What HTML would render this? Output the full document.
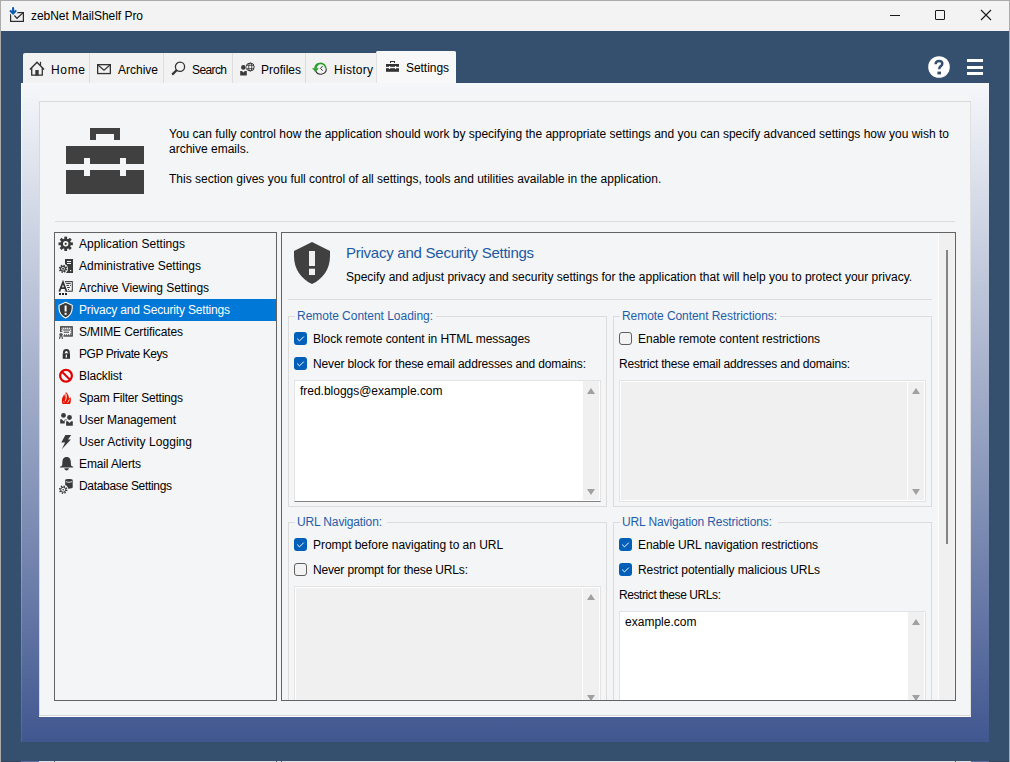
<!DOCTYPE html>
<html><head><meta charset="utf-8">
<style>
*{box-sizing:border-box;margin:0;padding:0}
html,body{width:1010px;height:762px;overflow:hidden}
body{position:relative;background:#354F6F;font-family:"Liberation Sans",sans-serif;font-size:12px;color:#000}
.a{position:absolute}
.t{position:absolute;white-space:nowrap;line-height:15px;font-size:12px}
svg{position:absolute;overflow:visible}
.sep{position:absolute;width:1px;background:#DDDDDD}
.cb{position:absolute;width:13px;height:13px;border-radius:3px;background:#005FB8}
.cb svg{left:0;top:0}
.cbu{position:absolute;width:13px;height:13px;border-radius:3px;border:1px solid #5F5F5F;background:#F3F3F3}
.grp{position:absolute;border:1px solid #DCDCDC}
.glbl{position:absolute;white-space:nowrap;line-height:15px;color:#1F5DAA;background:#F4F5F7;padding:0 2px}
.ta{position:absolute;background:#fff;border:1px solid #E3E3E3;overflow:hidden}
.tad{position:absolute;background:#F0F0F0;border:1px solid #E3E3E3;overflow:hidden}
.sb{position:absolute;top:0;bottom:0;right:0;width:17px;background:#F0F0F0}
.li{position:absolute;left:0;width:221px;height:22px}
</style></head><body>
<!-- window frame -->
<div class="a" style="left:0;top:0;width:1010px;height:762px;border:1px solid #ABABAB;border-bottom:none"></div>
<div class="a" style="left:1px;top:1px;width:1008px;height:30px;background:#F3F3F3"></div>
<div class="t" style="left:31px;top:9px;color:#000;letter-spacing:-0.037px">zebNet MailShelf Pro</div>

<!-- title icon -->
<svg style="left:0;top:0" width="40" height="31">
<rect x="10.6" y="12.6" width="12.8" height="8.8" fill="#EEEEF2" stroke="#2B2B2B" stroke-width="1.2"/>
<polyline points="13,14 17,18.3 23.2,12.6" fill="none" stroke="#2B2B2B" stroke-width="1.2"/>
<path d="M13.1 8 V11.5 M9.8 11 L13.1 14.3 L16.4 11" fill="none" stroke="#F3F3F3" stroke-width="3.6"/>
<path d="M13.1 8 V12.5 M10.6 11 L13.1 13.6 L15.6 11" fill="none" stroke="#0C5BB5" stroke-width="2.1" stroke-linecap="round"/>
</svg>
<!-- window controls -->
<div class="a" style="left:890px;top:15px;width:10px;height:1px;background:#1A1A1A"></div>
<div class="a" style="left:935px;top:10px;width:10px;height:10px;border:1px solid #1A1A1A;border-radius:1px"></div>
<svg style="left:980px;top:9px" width="12" height="12"><path d="M1 1 L11 11 M11 1 L1 11" stroke="#1A1A1A" stroke-width="1.1"/></svg>

<!-- tabs -->
<div class="a" style="left:23px;top:53px;width:354px;height:30px;background:#F2F2F2;border-radius:2px 0 0 0"></div>
<div class="sep" style="left:89px;top:53px;height:30px"></div>
<div class="sep" style="left:163px;top:53px;height:30px"></div>
<div class="sep" style="left:232px;top:53px;height:30px"></div>
<div class="sep" style="left:305px;top:53px;height:30px"></div>
<div class="a" style="left:376px;top:51px;width:80px;height:32px;background:#F8F8F8;border-left:1px solid #E2E2E2;border-radius:1.5px 1.5px 0 0"></div>
<div class="t" style="left:51px;top:63px;letter-spacing:0.661px">Home</div>
<div class="t" style="left:118px;top:63px;letter-spacing:-0.003px">Archive</div>
<div class="t" style="left:192px;top:63px;letter-spacing:-0.603px">Search</div>
<div class="t" style="left:261px;top:63px;letter-spacing:-0.002px">Profiles</div>
<div class="t" style="left:334px;top:63px;letter-spacing:0.276px">History</div>
<div class="t" style="left:406px;top:61px;letter-spacing:-0.049px">Settings</div>
<!-- tab icons -->
<svg style="left:26px;top:58px" width="24" height="22">
<path d="M3.9 11.4 L11 4.3 L18.1 11.4" fill="none" stroke="#333" stroke-width="1.4"/>
<path d="M5.7 10 V17.1 H16.3 V10" fill="none" stroke="#333" stroke-width="1.3"/>
<rect x="9.3" y="12" width="3.4" height="5.6" fill="#3A3A3A"/>
<path d="M14.5 3.8 V7.6" stroke="#333" stroke-width="1.2"/>
</svg>
<svg style="left:97px;top:64px" width="14" height="10">
<rect x="0.65" y="0.65" width="12.7" height="8.9" fill="none" stroke="#333" stroke-width="1.3"/>
<polyline points="1,1 7,6.3 13,1" fill="none" stroke="#333" stroke-width="1.2"/>
</svg>
<svg style="left:171px;top:61px" width="15" height="15">
<circle cx="9" cy="5.8" r="4.6" fill="none" stroke="#333" stroke-width="1.3"/>
<path d="M5.8 9 L1.2 13.6" stroke="#333" stroke-width="2.2"/>
</svg>
<svg style="left:236px;top:58px" width="24" height="22">
<circle cx="14.2" cy="9" r="4" fill="none" stroke="#333" stroke-width="1"/>
<ellipse cx="14.2" cy="9" rx="1.6" ry="4" fill="none" stroke="#333" stroke-width="0.8"/>
<path d="M10.5 7.3 H17.9 M10.5 10.7 H17.9" stroke="#333" stroke-width="0.8"/>
<circle cx="7.4" cy="9.4" r="3.1" fill="#F2F2F2"/>
<rect x="3.5" y="12.3" width="8" height="6" fill="#F2F2F2"/>
<circle cx="7.4" cy="9.4" r="2.3" fill="#3A3A3A"/>
<path d="M4.2 13 H6 L7.4 14.4 L8.8 13 H10.8 V17.6 H4.2 Z" fill="#3A3A3A"/>
</svg>
<svg style="left:308px;top:56px" width="24" height="22">
<path d="M18.4 12.4 A5.7 5.7 0 0 1 7.6 15" fill="none" stroke="#333" stroke-width="1.1"/>
<path d="M7.6 12.6 A5.1 5.1 0 0 1 17.8 12.4" fill="none" stroke="#2A9D2A" stroke-width="1.6"/>
<path d="M7.3 12.4 A5.4 5.4 0 0 1 10 8" fill="none" stroke="#2A9D2A" stroke-width="2.2"/>
<polygon points="4,12.2 10.9,12.2 7.45,15.9" fill="#2A9D2A"/>
<polyline points="14.6,10.1 12.5,12.4 14.6,14.7" fill="none" stroke="#333" stroke-width="1"/>
</svg>
<svg style="left:382px;top:54px" width="24" height="22">
<path d="M8 7 H13 V9 H12 V8 H9 V9 H8 Z" fill="#333"/>
<rect x="4" y="10" width="13" height="2.8" fill="#333"/>
<rect x="4" y="14.2" width="13" height="3.6" fill="#333"/>
<rect x="7" y="12" width="1.1" height="3" fill="#F8F8F8"/>
<rect x="13" y="12" width="1.1" height="3" fill="#F8F8F8"/>
</svg>
<!-- help + menu -->
<svg style="left:928px;top:56px" width="22" height="22">
<circle cx="11" cy="11" r="10.8" fill="#fff"/>
<path d="M7.6 8.3 C7.6 5.9 9.1 5.1 11 5.1 C13 5.1 14.3 6.1 14.3 7.8 C14.3 9.5 13.1 10 12.2 10.6 C11.5 11.1 11.3 11.6 11.3 13.3" fill="none" stroke="#354F6F" stroke-width="2.5"/>
<rect x="9.4" y="15.6" width="3.6" height="2.8" fill="#354F6F"/>
</svg>
<div class="a" style="left:967px;top:59px;width:16px;height:3px;background:#fff"></div>
<div class="a" style="left:967px;top:65.5px;width:16px;height:3px;background:#fff"></div>
<div class="a" style="left:967px;top:72px;width:16px;height:3px;background:#fff"></div>

<!-- panel -->
<div class="a" style="left:21px;top:83px;width:968px;height:659px;background:linear-gradient(#F5F7FA,#415790)"></div>
<div class="a" style="left:21px;top:83px;width:1px;height:659px;background:linear-gradient(rgba(255,255,255,0.6),rgba(255,255,255,0.08))"></div>
<div class="a" style="left:39px;top:93px;width:932px;height:624px;background:#F4F5F7"></div>
<div class="a" style="left:39px;top:101px;width:932px;height:615px;border:1px solid #D9D9D9;border-right-color:#E0E0E0"></div>
<div class="a" style="left:39px;top:716px;width:932px;height:1px;background:#FDFDFD"></div>


<!-- briefcase -->
<svg style="left:0;top:0" width="160" height="200">
<path d="M90 128 H120 V140 H114 V134 H96 V140 H90 Z" fill="#404040"/>
<path d="M66 146 H144 V164 H126 V158 H120 V164 H90 V158 H84 V164 H66 Z" fill="#404040"/>
<path d="M66 170 H84 V176 H90 V170 H120 V176 H126 V170 H144 V194 H66 Z" fill="#404040"/>
</svg>
<div class="t" style="left:169px;top:127px">You can fully control how the application should work by specifying the appropriate settings and you can specify advanced settings how you wish to</div>
<div class="t" style="left:169px;top:142px">archive emails.</div>
<div class="t" style="left:169px;top:172px">This section gives you full control of all settings, tools and utilities available in the application.</div>
<div class="a" style="left:55px;top:221px;width:900px;height:1px;background:#DCDCDC"></div>

<!-- list box -->
<div class="a" style="left:54px;top:232px;width:223px;height:469px;border:1px solid #636363;background:#F4F5F7"></div>
<div class="a" style="left:55px;top:299px;width:221px;height:22px;background:#0078D7"></div>
<div class="t" style="left:79px;top:237px;color:#000;letter-spacing:0.033px">Application Settings</div>
<div class="t" style="left:79px;top:259px;color:#000;letter-spacing:-0.001px">Administrative Settings</div>
<div class="t" style="left:79px;top:281px;color:#000;letter-spacing:-0.079px">Archive Viewing Settings</div>
<div class="t" style="left:79px;top:303px;color:#fff;letter-spacing:-0.18px">Privacy and Security Settings</div>
<div class="t" style="left:79px;top:325px;color:#000;letter-spacing:-0.111px">S/MIME Certificates</div>
<div class="t" style="left:79px;top:347px;color:#000;letter-spacing:-0.452px">PGP Private Keys</div>
<div class="t" style="left:79px;top:369px;color:#000;letter-spacing:-0.127px">Blacklist</div>
<div class="t" style="left:79px;top:391px;color:#000;letter-spacing:-0.211px">Spam Filter Settings</div>
<div class="t" style="left:79px;top:413px;color:#000;letter-spacing:-0.122px">User Management</div>
<div class="t" style="left:79px;top:435px;color:#000;letter-spacing:0.048px">User Activity Logging</div>
<div class="t" style="left:79px;top:457px;color:#000;letter-spacing:-0.124px">Email Alerts</div>
<div class="t" style="left:79px;top:479px;color:#000;letter-spacing:-0.314px">Database Settings</div>

<!-- right panel -->
<div class="a" style="left:281px;top:232px;width:675px;height:469px;border:1px solid #636363;background:#F4F5F7"></div>
<div class="a" style="left:938px;top:233px;width:1px;height:467px;background:#FCFCFC"></div>
<div class="a" style="left:939px;top:233px;width:16px;height:467px;background:#F0F0F0"></div>
<div class="a" style="left:946px;top:250px;width:2px;height:294px;background:#858585"></div>
<svg style="left:286px;top:236px" width="54" height="54">
<path d="M26 6 L44 15 L44 20 C44 33 37 43 26 48 C15 43 8 33 8 20 L8 15 Z" fill="#404040"/>
<rect x="23" y="15" width="6" height="15" fill="#F0F0F0"/>
<rect x="23" y="32.7" width="6" height="6.3" fill="#F0F0F0"/>
</svg>
<div class="t" style="left:346px;top:244px;font-size:15px;line-height:18px;letter-spacing:-0.25px;color:#1B59A4">Privacy and Security Settings</div>
<div class="t" style="left:346px;top:270px">Specify and adjust privacy and security settings for the application that will help you to protect your privacy.</div>
<div class="a" style="left:288px;top:299px;width:644px;height:1px;background:#DCDCDC"></div>

<div class="a" style="left:0;top:0;width:939px;height:700px;overflow:hidden">
<div class="grp" style="left:288px;top:316px;width:319px;height:191px"></div>
<div class="glbl" style="left:295px;top:309px;width:141px;letter-spacing:-0.033px">Remote Content Loading:</div>
<div class="cb" style="left:294px;top:332px"><svg width="13" height="13"><polyline points="3.2,6.6 5.5,8.9 9.8,4.6" fill="none" stroke="#fff" stroke-width="1"/></svg></div>
<div class="t" style="left:313px;top:332px;;letter-spacing:-0.054px">Block remote content in HTML messages</div>
<div class="cb" style="left:294px;top:357px"><svg width="13" height="13"><polyline points="3.2,6.6 5.5,8.9 9.8,4.6" fill="none" stroke="#fff" stroke-width="1"/></svg></div>
<div class="t" style="left:313px;top:357px;;letter-spacing:-0.131px">Never block for these email addresses and domains:</div>
<div class="a" style="left:294px;top:380px;width:307px;height:122px;border:1px solid #E3E3E3;border-bottom-color:#838383;background:#fff"></div>
<div class="a" style="left:583px;top:381px;width:16px;height:119px;background:#F0F0F0"></div>
<svg style="left:587px;top:388px" width="8" height="6"><polygon points="0,6 8,6 4,0" fill="#A0A0A0"/></svg>
<svg style="left:587px;top:489px" width="8" height="6"><polygon points="0,0 8,0 4,6" fill="#A0A0A0"/></svg>
<div class="t" style="left:300px;top:384px;;letter-spacing:-0.018px">fred.bloggs@example.com</div>
<div class="grp" style="left:613px;top:316px;width:319px;height:191px"></div>
<div class="glbl" style="left:620px;top:309px;width:160px;letter-spacing:-0.063px">Remote Content Restrictions:</div>
<div class="cbu" style="left:619px;top:332px"></div>
<div class="t" style="left:638px;top:332px;;letter-spacing:-0.001px">Enable remote content restrictions</div>
<div class="t" style="left:619px;top:357px;;letter-spacing:-0.2px">Restrict these email addresses and domains:</div>
<div class="a" style="left:619px;top:380px;width:307px;height:122px;border:1px solid #E3E3E3;background:#fff"></div>
<div class="a" style="left:621px;top:382px;width:286px;height:118px;background:#F0F0F0"></div>
<div class="a" style="left:908px;top:382px;width:16px;height:118px;background:#F0F0F0"></div>
<svg style="left:912px;top:388px" width="8" height="6"><polygon points="0,6 8,6 4,0" fill="#A0A0A0"/></svg>
<svg style="left:912px;top:489px" width="8" height="6"><polygon points="0,0 8,0 4,6" fill="#A0A0A0"/></svg>
<div class="grp" style="left:288px;top:522px;width:319px;height:300px"></div>
<div class="glbl" style="left:295px;top:515px;width:92px;letter-spacing:-0.138px">URL Navigation:</div>
<div class="cb" style="left:294px;top:538px"><svg width="13" height="13"><polyline points="3.2,6.6 5.5,8.9 9.8,4.6" fill="none" stroke="#fff" stroke-width="1"/></svg></div>
<div class="t" style="left:313px;top:538px;;letter-spacing:-0.042px">Prompt before navigating to an URL</div>
<div class="cbu" style="left:294px;top:563px"></div>
<div class="t" style="left:313px;top:563px;;letter-spacing:-0.161px">Never prompt for these URLs:</div>
<div class="a" style="left:294px;top:586px;width:307px;height:122px;border:1px solid #E3E3E3;background:#fff"></div>
<div class="a" style="left:296px;top:588px;width:286px;height:118px;background:#F0F0F0"></div>
<div class="a" style="left:583px;top:588px;width:16px;height:118px;background:#F0F0F0"></div>
<svg style="left:587px;top:594px" width="8" height="6"><polygon points="0,6 8,6 4,0" fill="#A0A0A0"/></svg>
<svg style="left:587px;top:695px" width="8" height="6"><polygon points="0,0 8,0 4,6" fill="#A0A0A0"/></svg>
<div class="grp" style="left:613px;top:522px;width:319px;height:300px"></div>
<div class="glbl" style="left:620px;top:515px;width:158px;letter-spacing:-0.109px">URL Navigation Restrictions:</div>
<div class="cb" style="left:619px;top:538px"><svg width="13" height="13"><polyline points="3.2,6.6 5.5,8.9 9.8,4.6" fill="none" stroke="#fff" stroke-width="1"/></svg></div>
<div class="t" style="left:638px;top:538px;;letter-spacing:-0.11px">Enable URL navigation restrictions</div>
<div class="cb" style="left:619px;top:563px"><svg width="13" height="13"><polyline points="3.2,6.6 5.5,8.9 9.8,4.6" fill="none" stroke="#fff" stroke-width="1"/></svg></div>
<div class="t" style="left:638px;top:563px;;letter-spacing:-0.08px">Restrict potentially malicious URLs</div>
<div class="t" style="left:619px;top:588px;;letter-spacing:-0.422px">Restrict these URLs:</div>
<div class="a" style="left:619px;top:611px;width:307px;height:98px;border:1px solid #E3E3E3;border-bottom-color:#838383;background:#fff"></div>
<div class="a" style="left:908px;top:612px;width:16px;height:95px;background:#F0F0F0"></div>
<svg style="left:912px;top:619px" width="8" height="6"><polygon points="0,6 8,6 4,0" fill="#A0A0A0"/></svg>
<svg style="left:912px;top:695px" width="8" height="6"><polygon points="0,0 8,0 4,6" fill="#A0A0A0"/></svg>
<div class="t" style="left:625px;top:615px;;letter-spacing:0.014px">example.com</div>
</div>


<!-- list icons -->
<svg style="left:57px;top:235px" width="18" height="18">
<g transform="translate(8.7,8.8)" fill="#3A3A3A">
<circle r="5.2"/>
<g id="tooth"><rect x="-1.4" y="-7.2" width="2.8" height="3"/></g>
<rect x="-1.4" y="-7.2" width="2.8" height="3" transform="rotate(45)"/>
<rect x="-1.4" y="-7.2" width="2.8" height="3" transform="rotate(90)"/>
<rect x="-1.4" y="-7.2" width="2.8" height="3" transform="rotate(135)"/>
<rect x="-1.4" y="-7.2" width="2.8" height="3" transform="rotate(180)"/>
<rect x="-1.4" y="-7.2" width="2.8" height="3" transform="rotate(225)"/>
<rect x="-1.4" y="-7.2" width="2.8" height="3" transform="rotate(270)"/>
<rect x="-1.4" y="-7.2" width="2.8" height="3" transform="rotate(315)"/>
</g>
<circle cx="8.7" cy="8.8" r="2.7" fill="#F4F5F7"/><circle cx="8.7" cy="8.8" r="1.1" fill="#3A3A3A"/>
</svg>
<svg style="left:57px;top:257px" width="18" height="18">
<rect x="8" y="2" width="8" height="14" fill="#3A3A3A"/>
<rect x="10" y="4" width="4" height="1" fill="#F4F5F7"/>
<rect x="10" y="6" width="4" height="1" fill="#F4F5F7"/>
<rect x="13" y="13" width="1.2" height="1.2" fill="#F4F5F7"/>
<g transform="translate(6,11.8)">
<circle r="5" fill="#F4F5F7"/>
<circle r="3.4" fill="none" stroke="#3A3A3A" stroke-width="1.6" stroke-dasharray="1.4 1.27"/>
<circle r="2.4" fill="none" stroke="#3A3A3A" stroke-width="1.2"/>
<circle r="1" fill="#3A3A3A"/>
</g>
</svg>
<svg style="left:56px;top:277px" width="20" height="20">
<rect x="8.9" y="4.6" width="7.4" height="9.6" fill="none" stroke="#333" stroke-width="1"/>
<path d="M10.1 6.4 H14.7 M10.1 8.45 H12.9 M13.9 8.45 H14.9 M10.8 10.5 H13.8 M11 12.5 H12.9" stroke="#333" stroke-width="1"/>
<path d="M3.3 14.4 L7 5.2 L10.6 14.4" fill="none" stroke="#F4F5F7" stroke-width="4"/>
<path d="M3.3 14.6 L7 5.2 L10.6 14.6 M5 11.2 H9" fill="none" stroke="#333" stroke-width="1.7"/>
<rect x="3" y="16" width="2" height="2" fill="#222"/><rect x="6" y="16" width="2" height="2" fill="#222"/><rect x="9" y="16" width="2" height="2" fill="#222"/>
</svg>
<svg style="left:57px;top:301px" width="18" height="18">
<path d="M8.6 1.3 L15.2 4.3 L15.2 7 C15.2 12 12.5 15 8.6 17 C4.7 15 2 12 2 7 L2 4.3 Z" fill="#3A3A3A" stroke="#fff" stroke-width="1.1"/>
<rect x="7.6" y="4.5" width="2" height="6" fill="#fff"/>
<rect x="7.6" y="11.8" width="2" height="2" fill="#fff"/>
</svg>
<svg style="left:56px;top:321px" width="20" height="20">
<rect x="4.1" y="5.2" width="12.7" height="10.4" fill="#333"/>
<rect x="5.4" y="6.5" width="10.1" height="7.8" fill="#F4F5F7"/>
<rect x="5.9" y="7" width="9.1" height="6.8" fill="none" stroke="#333" stroke-width="1" stroke-dasharray="1 1"/>
<path d="M7.2 9 H14 M7.8 11.2 H13" stroke="#333" stroke-width="1"/>
<circle cx="5" cy="13.6" r="2.6" fill="#F4F5F7"/>
<path d="M3.3 18.2 L4.2 14.8 M6.7 18.2 L5.8 14.8" stroke="#F4F5F7" stroke-width="2.6"/>
<circle cx="5" cy="13.6" r="1.7" fill="#555"/>
<path d="M3.5 17.8 L4.3 14.8 M6.5 17.8 L5.7 14.8" stroke="#444" stroke-width="1.1"/>
</svg>
<svg style="left:57px;top:345px" width="18" height="18">
<path d="M6.9 8.4 V7.4 A2.45 2.45 0 0 1 11.8 7.4 V8.4" fill="none" stroke="#333" stroke-width="1.9"/>
<rect x="5.7" y="8.3" width="7.3" height="5.5" fill="#333"/>
<rect x="8.7" y="9.6" width="1.3" height="3" fill="#F4F5F7"/>
</svg>
<svg style="left:57px;top:367px" width="18" height="18">
<circle cx="9" cy="8.8" r="5.9" fill="none" stroke="#E00000" stroke-width="2.2"/>
<path d="M5 4.8 L13 12.8" stroke="#E00000" stroke-width="2"/>
</svg>
<svg style="left:56px;top:388px" width="20" height="20">
<path d="M6.6 15.9 C5.6 14.2 5.7 11.3 6.5 9.3 C7.1 8 7.9 7 8.3 5.9 C8.9 7.6 9 8.9 9.2 9.8 C9.6 7.8 9.3 5.9 9.8 4 C11.8 5.6 13.2 8 13 10.8 C13.4 10.2 13.8 9.7 14.4 9 C15.2 11.2 15.1 14.2 13.9 15.9 Z" fill="#E81400"/>
<path d="M10.1 5.8 C10.6 8 10.3 10.6 9.2 13.2" fill="none" stroke="#F4F5F7" stroke-width="0.9"/>
<path d="M13.4 11.4 C13 12.8 12.2 13.9 11.3 14.7" fill="none" stroke="#F4F5F7" stroke-width="0.9"/>
<path d="M7.3 13.2 C7.6 14 8.1 14.6 8.6 15" fill="none" stroke="#F4F5F7" stroke-width="0.6"/>
</svg>
<svg style="left:56px;top:408px" width="20" height="20">
<circle cx="7.5" cy="7.4" r="2.4" fill="#3A3A3A"/>
<path d="M4.2 11.2 H5.8 L7.5 13.3 L9 11.4 H10.8 V12.2 H8.7 V15.6 H4.2 Z" fill="#3A3A3A"/>
<circle cx="13.5" cy="9.5" r="2.4" fill="#3A3A3A"/>
<path d="M10.1 13.2 H11.9 L13.5 15.1 L15.1 13.2 H16.8 V17.7 H10.1 Z" fill="#3A3A3A"/>
</svg>
<svg style="left:57px;top:433px" width="18" height="18">
<path d="M8.4 2 H14.2 L11 6.6 H13.9 L4.8 16.2 L8.1 9.6 H4.3 Z" fill="#3A3A3A"/>
</svg>
<svg style="left:57px;top:455px" width="18" height="18">
<path d="M9.6 2 C12.6 2 13.7 4.3 13.8 7 L14 10 C14.3 11 15.3 11.5 16.3 11.8 V12.6 H2.9 V11.8 C3.9 11.5 4.9 11 5.2 10 L5.4 7 C5.5 4.3 6.6 2 9.6 2 Z" fill="#3A3A3A"/>
<path d="M7.3 13.2 H11.9 C11.7 14.6 10.8 15.4 9.6 15.4 C8.4 15.4 7.5 14.6 7.3 13.2 Z" fill="#3A3A3A"/>
</svg>
<svg style="left:56px;top:476px" width="20" height="20">
<path d="M9.2 4 C9.2 2.6 16.7 2.6 16.7 4 V11.6 C16.7 13 9.2 13 9.2 11.6 Z" fill="#3A3A3A"/>
<path d="M10 5.6 C11.8 6.5 14.2 6.5 16 5.6" stroke="#F4F5F7" stroke-width="0.9" fill="none"/>
<g transform="translate(7.2,13.7)">
<circle r="5.2" fill="#F4F5F7"/>
<circle r="3.5" fill="none" stroke="#333" stroke-width="1.5" stroke-dasharray="1.3 1.45"/>
<circle r="2.5" fill="none" stroke="#333" stroke-width="1"/>
<circle r="0.8" fill="#333"/>
</g>
</svg>


<!-- bottom 1px artifact row -->
<div class="a" style="left:1px;top:761px;width:20px;height:1px;background:#34465E"></div>
<div class="a" style="left:21px;top:761px;width:18px;height:1px;background:#5E6D9B"></div>
<div class="a" style="left:39px;top:761px;width:932px;height:1px;background:#DEDFE1"></div>
<div class="a" style="left:54px;top:761px;width:1px;height:1px;background:#555"></div>
<div class="a" style="left:276px;top:761px;width:1px;height:1px;background:#555"></div>
<div class="a" style="left:281px;top:761px;width:1px;height:1px;background:#555"></div>
<div class="a" style="left:955px;top:761px;width:1px;height:1px;background:#555"></div>
<div class="a" style="left:971px;top:761px;width:18px;height:1px;background:#5E6D9B"></div>
<div class="a" style="left:989px;top:761px;width:20px;height:1px;background:#34465E"></div>

</body></html>
